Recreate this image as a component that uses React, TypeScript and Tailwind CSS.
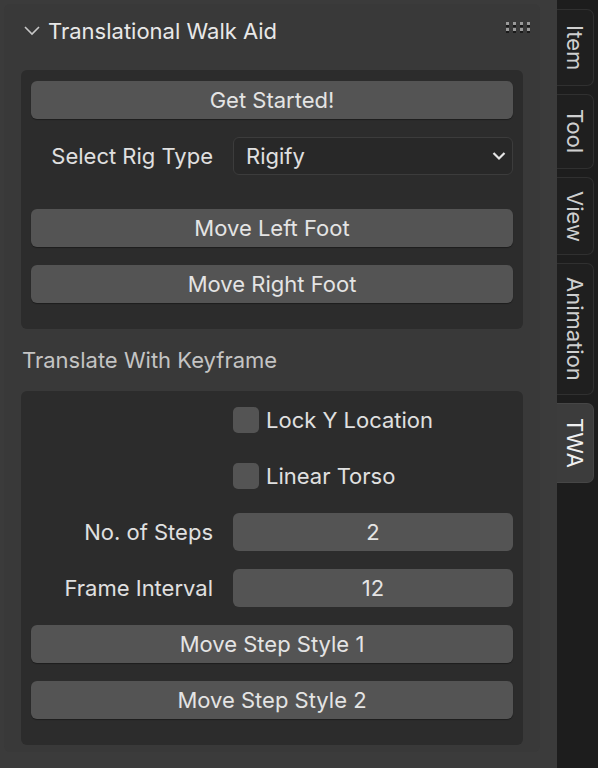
import React from 'react';

const FONT = "font-['Inter','Noto_Sans',sans-serif]";

const TABS = [
  { label: 'Item', h: 'h-[77px]', active: false },
  { label: 'Tool', h: 'h-[75px]', active: false },
  { label: 'View', h: 'h-[78px]', active: false },
  { label: 'Animation', h: 'h-[132px]', active: false },
  { label: 'TWA', h: 'h-[80px]', active: true },
];

const Button: React.FC<{ label: string }> = ({ label }) => (
  <div className="h-[38px] rounded-[6px] bg-[#545454] flex items-center justify-center text-[22px] text-[#e4e4e4] shadow-[0_1px_1px_rgba(0,0,0,0.35)]">
    {label}
  </div>
);

const LabelRow: React.FC<{ label: string; children: React.ReactNode }> = ({ label, children }) => (
  <div className="flex h-[38px] items-center">
    <div className="w-[202px] pr-[20px] text-right text-[22px] text-[#e0e0e0] whitespace-nowrap">{label}</div>
    <div className="flex-1 h-full">{children}</div>
  </div>
);

const Checkbox: React.FC<{ label: string }> = ({ label }) => (
  <div className="flex h-[38px] items-center pl-[202px]">
    <div className="w-[26px] h-[26px] rounded-[5px] bg-[#545454]" />
    <span className="ml-[7px] text-[22px] text-[#e0e0e0]">{label}</span>
  </div>
);

const DragHandle = () => (
  <svg width="26" height="14" viewBox="0 0 26 14">
    {[0, 1, 2, 3].map((c) =>
      [0, 1].map((r) => (
        <g key={`${c}-${r}`}>
          <rect x={1 + c * 7} y={3 + r * 6} width="3" height="3" fill="#1a1a1a" />
          <rect x={1 + c * 7} y={1 + r * 6} width="3" height="3" fill="#9a9a9a" />
        </g>
      ))
    )}
  </svg>
);

export default function App() {
  return (
    <div className={`w-[598px] h-[768px] flex bg-[#3d3d3d] overflow-hidden ${FONT}`}>
      {/* viewport + sidebar panel */}
      <div className="w-[557px] h-full bg-[#3b3b3b] pl-[4px] pt-[4px]">
        <div className="w-[536px] h-[748px] rounded-[6px] bg-[#393939] px-[17px]">
          {/* header */}
          <div className="flex items-center h-[54px]">
            <svg width="18" height="12" viewBox="0 0 18 12" className="ml-[2px]">
              <path d="M2 2 L9 9 L16 2" fill="none" stroke="#c8c8c8" strokeWidth="1.6" />
            </svg>
            <span className="ml-[7px] text-[22px] text-[#e8e8e8]">Translational Walk Aid</span>
            <div className="ml-auto mr-[-8px] mt-[-6px]">
              <DragHandle />
            </div>
          </div>

          {/* box 1 */}
          <div className="mt-[12px] rounded-[6px] bg-[#2c2c2c] px-[10px] pt-[11px] pb-[26px]">
            <Button label="Get Started!" />
            <div className="mt-[18px]">
              <LabelRow label="Select Rig Type">
                <div className="h-full rounded-[6px] bg-[#282828] border border-[#3c3c3c] flex items-center pl-[12px] pr-[5px] text-[22px] text-[#e0e0e0]">
                  <span>Rigify</span>
                  <svg width="16" height="12" viewBox="0 0 16 12" className="ml-auto">
                    <path d="M2.5 3 L8 8.5 L13.5 3" fill="none" stroke="#e6e6e6" strokeWidth="2.2" />
                  </svg>
                </div>
              </LabelRow>
            </div>
            <div className="mt-[34px]">
              <Button label="Move Left Foot" />
            </div>
            <div className="mt-[18px]">
              <Button label="Move Right Foot" />
            </div>
          </div>

          {/* section label */}
          <div className="h-[62px] flex items-center pl-[1px] text-[22px] text-[#c4c4c4]">
            Translate With Keyframe
          </div>

          {/* box 2 */}
          <div className="rounded-[6px] bg-[#2c2c2c] px-[10px] pt-[10px] pb-[26px] flex flex-col gap-[18px]">
            <Checkbox label="Lock Y Location" />
            <Checkbox label="Linear Torso" />
            <LabelRow label="No. of Steps">
              <div className="h-full rounded-[6px] bg-[#545454] flex items-center justify-center text-[22px] text-[#e4e4e4]">2</div>
            </LabelRow>
            <LabelRow label="Frame Interval">
              <div className="h-full rounded-[6px] bg-[#545454] flex items-center justify-center text-[22px] text-[#e4e4e4]">12</div>
            </LabelRow>
            <Button label="Move Step Style 1" />
            <Button label="Move Step Style 2" />
          </div>
        </div>
      </div>

      {/* tab bar */}
      <div className="w-[41px] h-full bg-[#1d1d1d] pt-[9px] flex flex-col gap-[8px]">
        {TABS.map((t) => (
          <div
            key={t.label}
            className={`w-[37px] ${t.h} rounded-r-[7px] border border-l-0 ${
              t.active ? 'bg-[#3c3c3c] border-[#464646] text-[#f0f0f0]' : 'bg-[#1f1f1f] border-[#303030] text-[#cfcfcf]'
            } flex items-center justify-center`}
          >
            <span className="[writing-mode:vertical-rl] text-[22px] leading-none">{t.label}</span>
          </div>
        ))}
      </div>
    </div>
  );
}
